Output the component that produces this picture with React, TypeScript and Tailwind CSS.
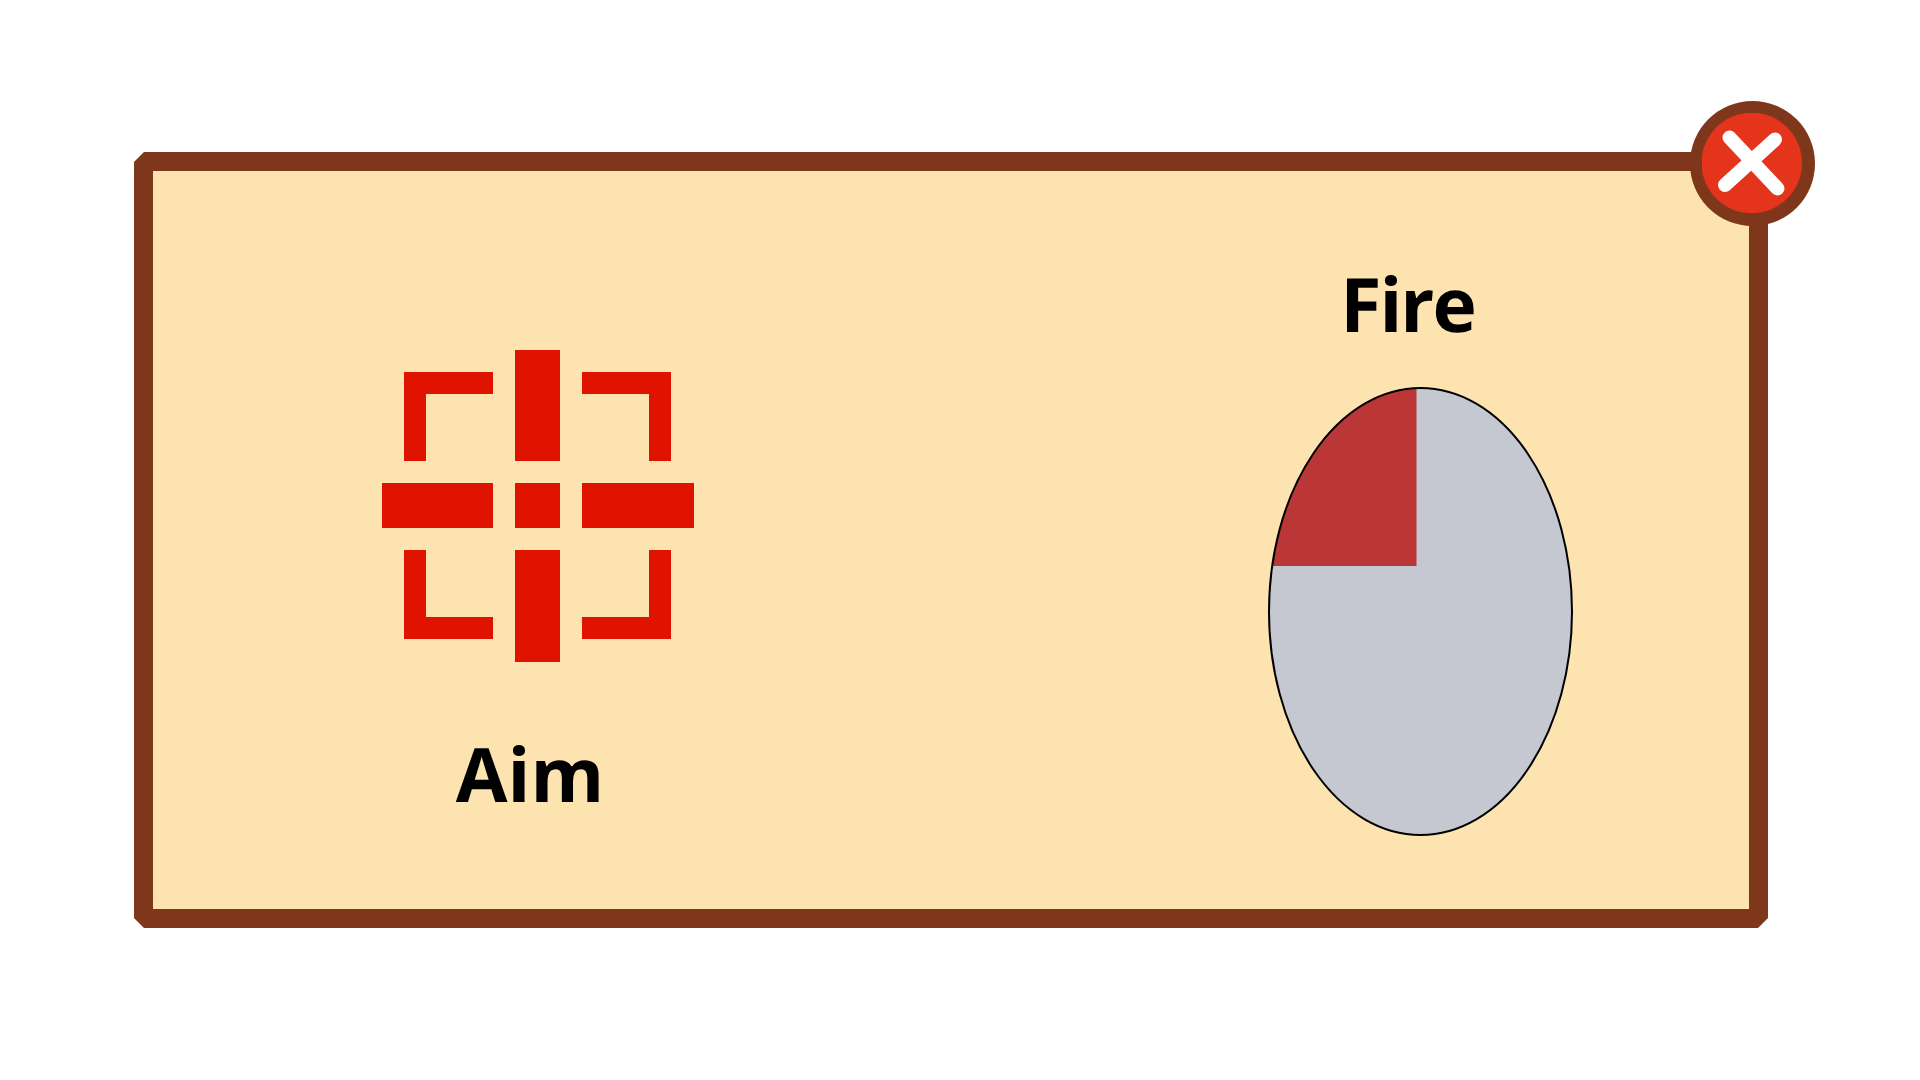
const captionFont = "font-['Open_Sans','Noto_Sans',sans-serif] font-bold text-[75px] leading-[76px] text-black [text-rendering:geometricPrecision]";

function Crosshair() {
  return (
    <svg width="312" height="312" viewBox="0 0 312 312" fill="#e01300" className="block shrink-0">
      {/* center cross */}
      <rect x="133" y="0" width="45" height="111" />
      <rect x="0" y="133" width="111" height="45" />
      <rect x="133" y="133" width="45" height="45" />
      <rect x="200" y="133" width="112" height="45" />
      <rect x="133" y="200" width="45" height="112" />
      {/* corner brackets */}
      <path d="M22 22H111V44H44V111H22Z" />
      <path d="M200 22H289V111H267V44H200Z" />
      <path d="M22 200H44V267H111V289H22Z" />
      <path d="M267 200H289V289H200V267H267Z" />
    </svg>
  );
}

function CooldownDial() {
  return (
    <svg width="305" height="449" viewBox="0 0 305 449" className="block shrink-0">
      <defs>
        <clipPath id="dial">
          <ellipse cx="152.5" cy="224.5" rx="151.5" ry="223.5" />
        </clipPath>
      </defs>
      <ellipse cx="152.5" cy="224.5" rx="151.5" ry="223.5" fill="#c5c8d1" />
      <rect x="0" y="0" width="148.5" height="179" fill="#bb3636" clipPath="url(#dial)" />
      <ellipse cx="152.5" cy="224.5" rx="151.5" ry="223.5" fill="none" stroke="#000" strokeWidth="2" />
    </svg>
  );
}

function CloseButton() {
  return (
    <button className="absolute -top-[51px] -right-[47px] flex h-[125px] w-[125px] items-center justify-center rounded-full bg-[#7f371c]">
      <svg width="101" height="101" viewBox="0 0 101 101" className="block">
        <circle cx="49.75" cy="50" r="50.25" fill="#e4341c" />
        <path
          d="M27.5 24.5L75.5 75.5M73 26.5L23 72"
          fill="none"
          stroke="#fff"
          strokeWidth="14"
          strokeLinecap="round"
        />
      </svg>
    </button>
  );
}

export default function App() {
  return (
    <div className="h-screen w-full overflow-hidden bg-white pl-[134px] pt-[152px]">
      <div className="relative h-[776px] w-[1634px]">
        <div className="flex h-full w-full justify-between border-[19px] border-[#7f371c] bg-[#fde3b0] [clip-path:polygon(10px_0,calc(100%-10px)_0,100%_10px,100%_calc(100%-10px),calc(100%-10px)_100%,10px_100%,0_calc(100%-10px),0_10px)]">
          {/* Aim */}
          <div className="ml-[229px] mt-[179px] flex w-[312px] flex-col items-center">
            <Crosshair />
            <span className={`mr-[16px] mt-[73px] ${captionFont}`}>Aim</span>
          </div>

          {/* Fire */}
          <div className="mr-[176px] mt-[94px] flex w-[305px] flex-col items-center">
            <span className={`mr-[26px] tracking-[-2px] ${captionFont}`}>Fire</span>
            <div className="mt-[46px]">
              <CooldownDial />
            </div>
          </div>
        </div>

        <CloseButton />
      </div>
    </div>
  );
}
